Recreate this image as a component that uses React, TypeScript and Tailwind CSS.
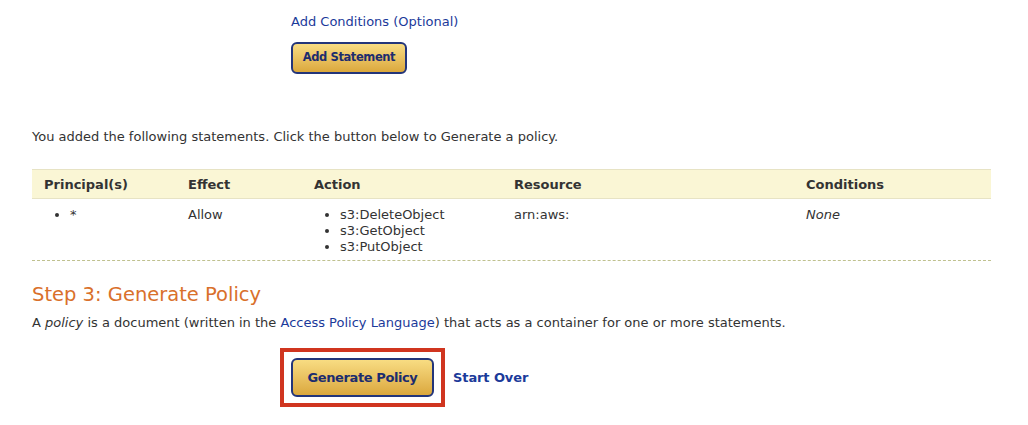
import React from "react";

const font = { fontFamily: '"DejaVu Sans", Verdana, sans-serif' };

export default function App() {
  return (
    <div className="w-[1028px] h-[425px] bg-white text-[#333333] text-[13px] overflow-hidden" style={font}>
      <div className="pt-[14px] pl-[291px]">
        <a className="block leading-[16px] text-[#1b3a9a] text-[13px]">Add Conditions (Optional)</a>
        <button className="mt-[12px] h-[32px] w-[116px] rounded-[6px] border-2 border-[#23357a] bg-gradient-to-b from-[#f8dc82] to-[#dba83c] text-[#1c2c6e] font-bold text-[11.5px] tracking-[-0.4px]">
          Add Statement
        </button>
      </div>
      <div className="pl-[32px] pr-[37px]">
        <p className="mt-[55px] leading-[16px]">
          You added the following statements. Click the button below to Generate a policy.
        </p>
        <div className="mt-[24px]">
          <div className="grid grid-cols-[144px_126px_200px_292px_197px] h-[30px] items-center bg-[#faf6d5] border-y border-[#e7e3c4] font-bold text-[#333]">
            <div className="pl-[12px] pt-[1px]">Principal(s)</div>
            <div className="pl-[12px] pt-[1px]">Effect</div>
            <div className="pl-[12px] pt-[1px]">Action</div>
            <div className="pl-[12px] pt-[1px]">Resource</div>
            <div className="pl-[12px] pt-[1px]">Conditions</div>
          </div>
          <div className="grid grid-cols-[144px_126px_200px_292px_197px] pt-[8px] pb-[5px] leading-[16px] border-b border-dashed border-[#bfc18f]">
            <div className="pl-[12px]">
              <ul className="list-disc pl-[26px]">
                <li>*</li>
              </ul>
            </div>
            <div className="pl-[12px]">Allow</div>
            <div className="pl-[12px]">
              <ul className="list-disc pl-[26px]">
                <li>s3:DeleteObject</li>
                <li>s3:GetObject</li>
                <li>s3:PutObject</li>
              </ul>
            </div>
            <div className="pl-[12px]">arn:aws:</div>
            <div className="pl-[12px] italic">None</div>
          </div>
        </div>
        <h2 className="mt-[22px] leading-[24px] text-[19.5px] text-[#d9702b]">Step 3: Generate Policy</h2>
        <p className="mt-[8px] leading-[16px]">
          A <i>policy</i> is a document (written in the <a className="text-[#1b3a9a]">Access Policy Language</a>) that acts as a container for one or more statements.
        </p>
      </div>
      <div className="mt-[17px] pl-[280px] flex items-center">
        <div className="border-4 border-[#d0351f] px-[7px] pt-[6px] pb-[6px]">
          <button className="h-[39px] w-[143px] rounded-[6px] border-2 border-[#23357a] bg-gradient-to-b from-[#f8dc82] to-[#dba83c] text-[#1c2c6e] font-bold text-[13px] tracking-[-0.4px]">
            Generate Policy
          </button>
        </div>
        <a className="ml-[8px] font-bold text-[13px] text-[#1b3a9a] tracking-[-0.1px]">Start Over</a>
      </div>
    </div>
  );
}
